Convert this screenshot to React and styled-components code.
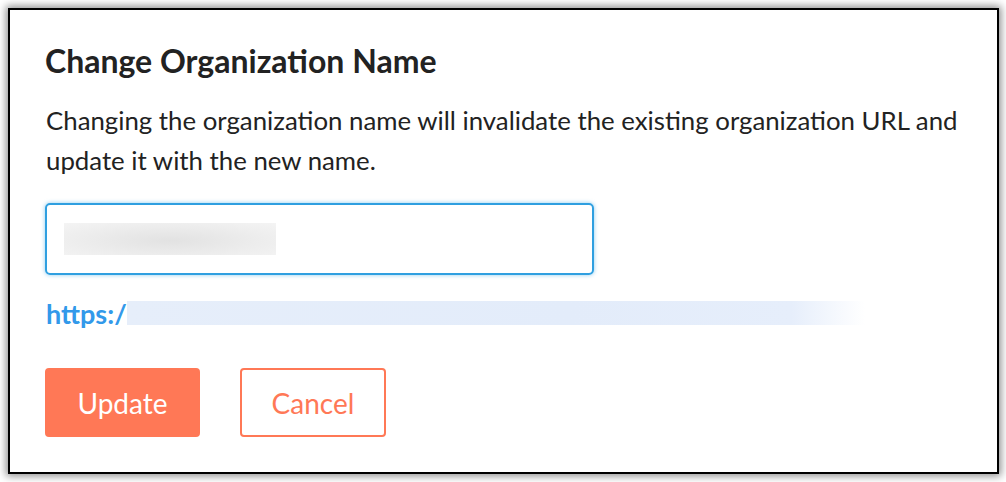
import React, { useState } from 'react';
import styled, { createGlobalStyle } from 'styled-components';

const GlobalStyle = createGlobalStyle`
  html, body {
    margin: 0;
    padding: 0;
    background: #ffffff;
    font-family: Lato, "Open Sans", sans-serif;
  }
`;

const Page = styled.div`
  width: 1006px;
  height: 482px;
  padding: 8px;
  box-sizing: border-box;
`;

const Dialog = styled.div`
  box-sizing: border-box;
  width: 991px;
  height: 466px;
  border: 2px solid #000;
  background: #fff;
  box-shadow: 0 0 8px 2px rgba(0, 0, 0, 0.45);
  padding: 32px 36px 0 35px;
  display: flex;
  flex-direction: column;
`;

const Title = styled.h1`
  margin: 0;
  font-size: 32px;
  font-weight: 700;
  line-height: 38px;
  color: #222;
`;

const Description = styled.p`
  margin: 20px 0 0 1px;
  font-size: 25.8px;
  line-height: 40px;
  color: #222;
`;

const NameInput = styled.div`
  box-sizing: border-box;
  margin-top: 23px;
  width: 549px;
  height: 72px;
  border: 2px solid #2f9fe0;
  border-radius: 5px;
  box-shadow: 0 0 4px rgba(47, 159, 224, 0.55);
  display: flex;
  align-items: center;
  padding-left: 17px;
`;

const Redacted = styled.span`
  display: block;
  flex: none;
  width: ${p => p.$w}px;
  height: ${p => p.$h}px;
  background: ${p => p.$bg};
`;

const UrlRow = styled.div`
  margin-top: 23px;
  margin-left: 1px;
  display: flex;
  align-items: center;
  height: 30px;
`;

const UrlText = styled.span`
  font-size: 27px;
  font-weight: 700;
  color: #3299ea;
`;

const Actions = styled.div`
  margin-top: 40px;
  display: flex;
  gap: 40px;
`;

const Button = styled.button`
  box-sizing: border-box;
  height: 69px;
  width: ${p => p.$w}px;
  border-radius: 4px;
  font-family: Lato, sans-serif;
  font-size: 28px;
  cursor: pointer;
  border: 2px solid #ff7856;
  background: ${p => (p.$primary ? '#ff7856' : '#fff')};
  color: ${p => (p.$primary ? '#fff' : '#ff7856')};
`;

export default function App() {
  const [name] = useState('');

  return (
    <Page>
      <GlobalStyle />
      <Dialog>
        <Title>Change Organization Name</Title>
        <Description>
          Changing the organization name will invalidate the existing organization URL and
          update it with the new name.
        </Description>
        <NameInput data-value={name}>
          <Redacted
            $w={212}
            $h={32}
            $bg="radial-gradient(ellipse at 50% 55%, #e2e2e2 0%, #ececec 55%, #f4f4f4 100%)"
          />
        </NameInput>
        <UrlRow>
          <UrlText>https:/</UrlText>
          <Redacted
            $w={738}
            $h={24}
            $bg="linear-gradient(90deg, #e6eefa 0%, #e3ecfa 60%, #e6eefb 90%, #ffffff 100%)"
          />
        </UrlRow>
        <Actions>
          <Button $primary $w={155}>Update</Button>
          <Button $w={146}>Cancel</Button>
        </Actions>
      </Dialog>
    </Page>
  );
}
